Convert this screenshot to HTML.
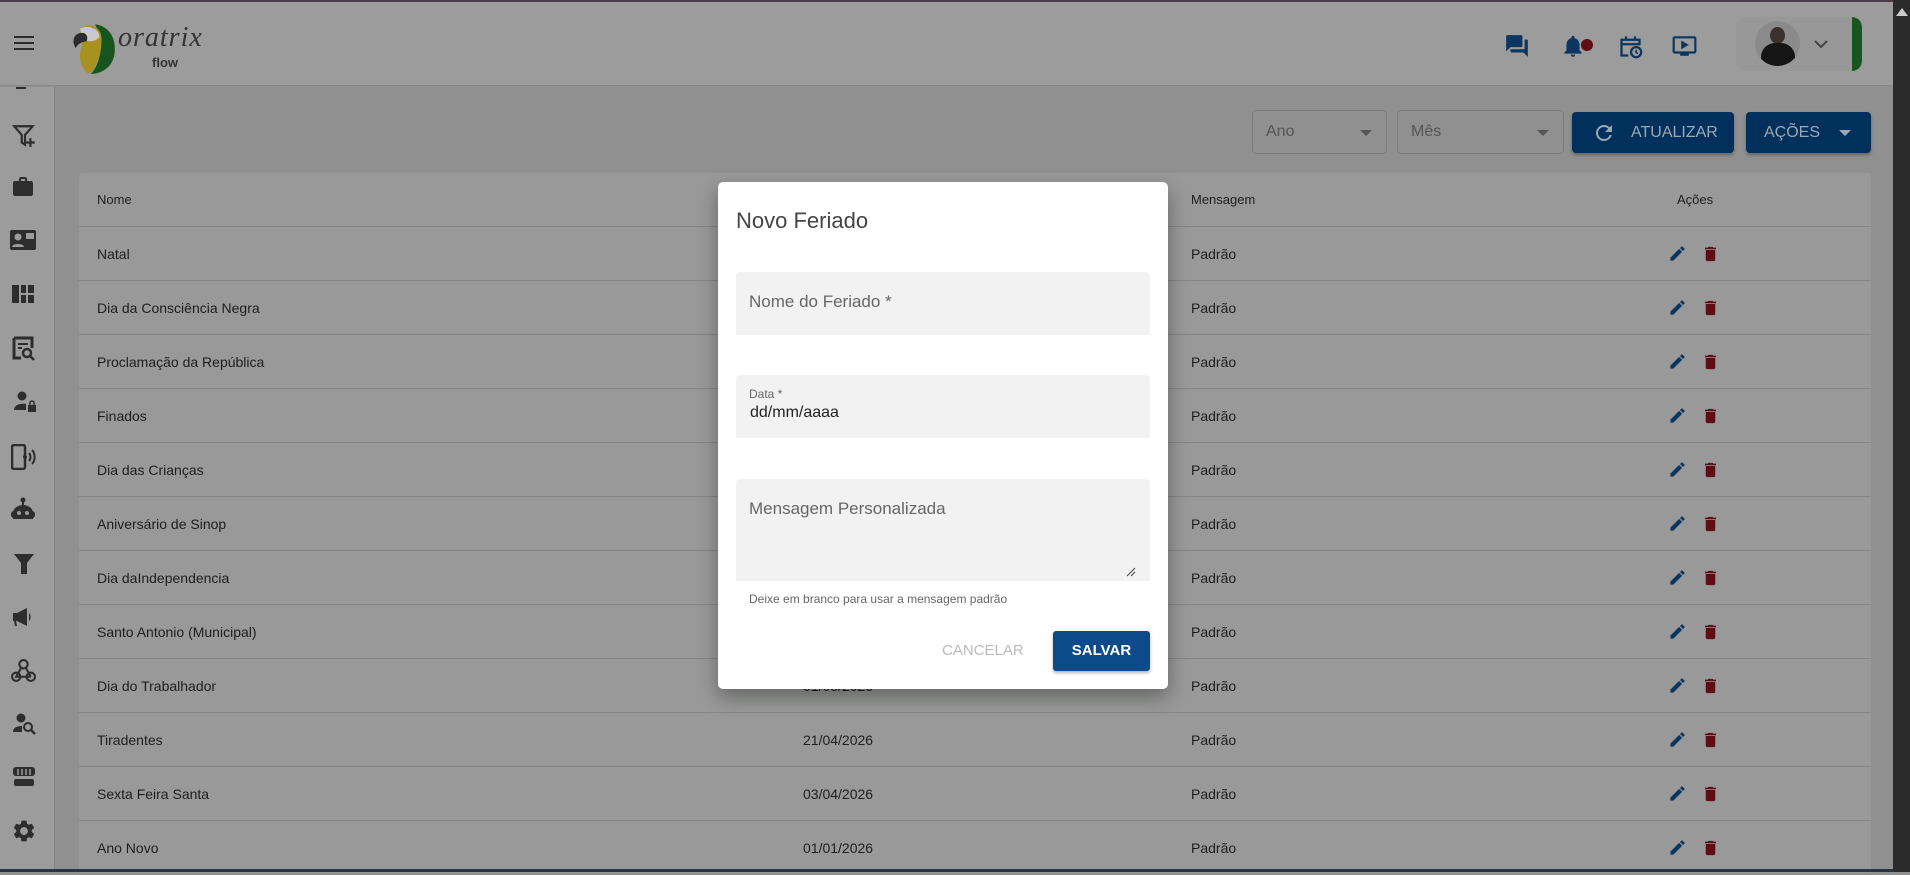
<!DOCTYPE html>
<html><head><meta charset="utf-8"><style>
*{margin:0;padding:0;box-sizing:border-box}
body{width:1910px;height:872px;overflow:hidden;background:#8f908f;font-family:"Liberation Sans",sans-serif;position:relative;color:#1e1e1e}
.abs{position:absolute}
.hdr{left:0;top:0;width:1893px;height:86px;background:#9b9c9b;border-bottom:1px solid #888;border-top:2px solid #4a3c46}
.side{left:0;top:87px;width:55px;height:785px;background:#9b9c9b;border-right:1px solid #868686}
.card{left:79px;top:173px;width:1792px;height:700px;background:#989998;border-radius:4px 4px 0 0}
.row{position:absolute;left:0;width:1792px;height:54px;border-top:1px solid #858585;font-size:14px;line-height:54px}
.row span{position:absolute}
.c1{left:18px}.c2{left:724px}.c3{left:1112px}
.sb{left:1893px;top:0;width:17px;height:872px;background:#2b2b2b}
.sel{border:1px solid #7a7a7a;border-radius:4px;height:44px;top:110px;font-size:16px;color:#555;line-height:42px;padding-left:13px}
.tri{position:absolute;right:14px;top:19px;width:0;height:0;border-left:6px solid transparent;border-right:6px solid transparent;border-top:6px solid #555}
.btn{background:#02305c;border-radius:4px;height:41px;top:112px;color:#9ea8b3;font-size:16px;line-height:41px;box-shadow:0 2px 3px rgba(0,0,0,.3)}
.modal{left:718px;top:182px;width:450px;height:507px;background:#fff;border-radius:5px;box-shadow:0 8px 20px rgba(0,0,0,.35)}
.fld{position:absolute;left:18px;width:414px;background:#f2f2f2;border-radius:4px 4px 0 0}
.lbl{position:absolute;left:13px;color:#666;font-size:17px}
</style></head><body>
<div class="abs hdr">
  <svg class="abs" style="left:14px;top:33px" width="20" height="16"><rect y="1" width="20" height="2" fill="#2d2d2d"/><rect y="7" width="20" height="2" fill="#2d2d2d"/><rect y="13" width="20" height="2" fill="#2d2d2d"/></svg>
  <svg class="abs" style="left:68px;top:18px" width="52" height="56" viewBox="0 0 46 52">
    <path d="M24 4 C38 6 44 18 42 32 C40 44 30 50 20 50 C30 40 32 20 24 4Z" fill="#17551f"/>
    <path d="M10 8 C20 2 30 6 30 18 C30 32 26 44 18 50 C10 44 8 32 12 24 Z" fill="#a8921f"/>
    <path d="M10 8 C18 4 28 8 28 16 C22 22 14 20 12 16Z" fill="#c9c9c9"/>
    <path d="M12 12 C4 12 2 20 6 26 C8 22 12 20 16 20 C18 16 16 12 12 12Z" fill="#2b2b2b"/>
  </svg>
  <div class="abs" style="left:118px;top:20px;font-family:'Liberation Serif',serif;font-style:italic;font-size:28px;color:#333;letter-spacing:1px">oratrix</div>
  <div class="abs" style="left:152px;top:53px;font-size:13px;font-weight:bold;color:#333">flow</div>
  <svg class="abs" style="left:1504px;top:31px" width="26" height="26" viewBox="0 0 24 24"><path fill="#0d355f" d="M21 6h-2v9H6v2c0 .55.45 1 1 1h11l4 4V7c0-.55-.45-1-1-1zm-4 6V3c0-.55-.45-1-1-1H3c-.55 0-1 .45-1 1v14l4-4h10c.55 0 1-.45 1-1z"/></svg>
  <svg class="abs" style="left:1560px;top:31px" width="26" height="26" viewBox="0 0 24 24"><path fill="#0d355f" d="M12 22c1.1 0 2-.9 2-2h-4c0 1.1.89 2 2 2zm6-6v-5c0-3.07-1.64-5.64-4.5-6.32V4c0-.83-.67-1.5-1.5-1.5s-1.5.67-1.5 1.5v.68C7.63 5.36 6 7.92 6 11v5l-2 2v1h16v-1l-2-2z"/></svg>
  <div class="abs" style="left:1581px;top:37px;width:12px;height:12px;border-radius:50%;background:#5e0d14"></div>
  <svg class="abs" style="left:1617px;top:31px" width="27" height="27" viewBox="0 0 24 24"><path fill="none" stroke="#0d355f" stroke-width="2" d="M10 20H4V6h16v5M4 10h16M8 3v4M16 3v4"/><circle cx="17" cy="17" r="4.5" fill="none" stroke="#0d355f" stroke-width="2"/><path d="M17 15v2.3l1.5 1" stroke="#0d355f" stroke-width="1.5" fill="none"/></svg>
  <svg class="abs" style="left:1671px;top:31px" width="27" height="26" viewBox="0 0 24 24"><path fill="#0d355f" d="M21 3H3c-1.1 0-2 .9-2 2v12c0 1.1.9 2 2 2h5v2h8v-2h5c1.1 0 2-.9 2-2V5c0-1.1-.9-2-2-2zm0 14H3V5h18v12zM16 11l-7 4V7z"/></svg>
  <div class="abs" style="left:1736px;top:15px;width:126px;height:54px;border-radius:10px;background:#979897;overflow:hidden">
    <div class="abs" style="right:0;top:0;width:10px;height:54px;background:#17561f;border-radius:0 10px 10px 0"></div>
  </div>
  <div class="abs" style="left:1755px;top:19px;width:45px;height:45px;border-radius:50%;background:#8a8a8a;overflow:hidden">
    <div class="abs" style="left:15px;top:6px;width:15px;height:17px;border-radius:50%;background:#3a302c"></div>
    <div class="abs" style="left:6px;top:22px;width:34px;height:30px;border-radius:14px 14px 0 0;background:#151515"></div>
  </div>
  <svg class="abs" style="left:1813px;top:37px" width="16" height="10"><path d="M2 2l6 6 6-6" stroke="#444" stroke-width="2" fill="none"/></svg>
</div>
<div class="abs side">
  <div class="abs" style="left:16px;top:0;width:10px;height:2px;background:#2d2d2d"></div>
  <svg class="abs" style="left:12px;top:36px" width="26" height="26" viewBox="0 0 24 24"><path d="M2 3h17l-7 8v9l-3-2v-7z" fill="none" stroke="#2d2d2d" stroke-width="2"/><path d="M17 14v8M13 18h8" stroke="#2d2d2d" stroke-width="2"/></svg>
  <svg class="abs" style="left:11px;top:88px" width="24" height="24" viewBox="0 0 24 24"><path fill="#2d2d2d" d="M20 6h-4V4c0-1.1-.9-2-2-2h-4c-1.1 0-2 .9-2 2v2H4c-1.1 0-2 .9-2 2v11c0 1.1.9 2 2 2h16c1.1 0 2-.9 2-2V8c0-1.1-.9-2-2-2zm-6 0h-4V4h4v2z"/></svg>
  <svg class="abs" style="left:9px;top:141px" width="28" height="24" viewBox="0 0 28 24"><rect x="1" y="2" width="26" height="20" rx="2" fill="#2d2d2d"/><circle cx="9" cy="9" r="3.5" fill="#9b9c9b"/><path d="M3 19c0-4 12-4 12 0z" fill="#9b9c9b"/><rect x="17" y="5" width="8" height="6" fill="#9b9c9b"/></svg>
  <svg class="abs" style="left:11px;top:195px" width="24" height="24" viewBox="0 0 24 24"><path fill="#2d2d2d" d="M1 3h7v18H1zM10 3h5v8h-5zM17 3h6v8h-6zM10 13h5v8h-5zM17 13h6v8h-6z"/></svg>
  <svg class="abs" style="left:12px;top:249px" width="24" height="26" viewBox="0 0 24 26"><path d="M2 2h18v10" fill="none" stroke="#2d2d2d" stroke-width="3"/><path d="M2 2v20h7" fill="none" stroke="#2d2d2d" stroke-width="3"/><path d="M6 8h10M6 12h4" stroke="#2d2d2d" stroke-width="2"/><circle cx="15" cy="17" r="4" fill="none" stroke="#2d2d2d" stroke-width="2.5"/><path d="M18 20l4 4" stroke="#2d2d2d" stroke-width="2.5"/></svg>
  <svg class="abs" style="left:13px;top:303px" width="24" height="24" viewBox="0 0 24 24"><circle cx="9" cy="6" r="4.5" fill="#2d2d2d"/><path d="M1 20c0-5 6-7 12-6v6z" fill="#2d2d2d"/><rect x="15" y="15" width="8" height="7" fill="#2d2d2d"/><path d="M17 15v-2a2 2 0 014 0v2" fill="none" stroke="#2d2d2d" stroke-width="1.5"/></svg>
  <svg class="abs" style="left:11px;top:357px" width="26" height="26" viewBox="0 0 26 26"><rect x="1" y="1" width="13" height="24" rx="2" fill="none" stroke="#2d2d2d" stroke-width="2.5"/><circle cx="14" cy="13" r="2" fill="#2d2d2d"/><path d="M18 9c2 2 2 6 0 8M21 6c3.5 3.5 3.5 10.5 0 14" fill="none" stroke="#2d2d2d" stroke-width="2"/></svg>
  <svg class="abs" style="left:10px;top:410px" width="26" height="24" viewBox="0 0 26 24"><circle cx="13" cy="3" r="2.5" fill="#2d2d2d"/><rect x="12" y="4" width="2" height="4" fill="#2d2d2d"/><path d="M3 16a10 8 0 0120 0v6H3z" fill="#2d2d2d"/><rect x="1" y="14" width="24" height="7" rx="3" fill="#2d2d2d"/><circle cx="9" cy="16" r="2" fill="#9b9c9b"/><circle cx="17" cy="16" r="2" fill="#9b9c9b"/></svg>
  <svg class="abs" style="left:13px;top:466px" width="22" height="22" viewBox="0 0 22 22"><path d="M1 1h20l-7 9v11h-6V10z" fill="#2d2d2d"/></svg>
  <svg class="abs" style="left:11px;top:518px" width="24" height="24" viewBox="0 0 24 24"><path fill="#2d2d2d" d="M2 8h4l10-5v18L6 16H5l1 5H4l-1-5H2zM18 8c2 1 2 7 0 8z"/></svg>
  <svg class="abs" style="left:11px;top:571px" width="25" height="25" viewBox="0 0 24 24"><circle cx="12" cy="6" r="4" fill="none" stroke="#2d2d2d" stroke-width="2"/><circle cx="5" cy="18" r="4" fill="none" stroke="#2d2d2d" stroke-width="2"/><circle cx="19" cy="18" r="4" fill="none" stroke="#2d2d2d" stroke-width="2"/><path d="M10 9l-5 9h14M14 9l5 9" fill="none" stroke="#2d2d2d" stroke-width="2"/></svg>
  <svg class="abs" style="left:12px;top:625px" width="24" height="24" viewBox="0 0 24 24"><circle cx="9" cy="6" r="4.5" fill="#2d2d2d"/><path d="M1 20c0-5 5-6 9-6v6z" fill="#2d2d2d"/><circle cx="16" cy="15" r="4" fill="none" stroke="#2d2d2d" stroke-width="2"/><path d="M19 18l4 4" stroke="#2d2d2d" stroke-width="2.5"/></svg>
  <svg class="abs" style="left:12px;top:679px" width="24" height="22" viewBox="0 0 24 22"><rect x="1" y="1" width="22" height="9" rx="3" fill="#2d2d2d"/><path d="M6 3v6M10 3v6M14 3v6M18 3v6" stroke="#9b9c9b" stroke-width="1.5"/><rect x="2" y="13" width="20" height="7" rx="2" fill="#2d2d2d"/></svg>
  <svg class="abs" style="left:11px;top:731px" width="26" height="26" viewBox="0 0 24 24"><path fill="#2d2d2d" d="M19.14 12.94c.04-.3.06-.61.06-.94 0-.32-.02-.64-.07-.94l2.03-1.58a.49.49 0 00.12-.61l-1.920-3.32a.488.488 0 00-.59-.22l-2.39.96c-.5-.38-1.03-.7-1.62-.94l-.36-2.54a.484.484 0 00-.48-.41h-3.84c-.24 0-.43.17-.47.41l-.36 2.54c-.59.24-1.13.57-1.62.94l-2.39-.96c-.22-.08-.47 0-.59.22L2.74 8.87c-.12.21-.08.47.12.61l2.03 1.58c-.05.3-.09.63-.09.94s.02.64.07.94l-2.03 1.58a.49.49 0 00-.12.61l1.92 3.32c.12.22.37.29.59.22l2.39-.96c.5.38 1.03.7 1.62.94l.36 2.54c.05.24.24.41.48.41h3.84c.24 0 .44-.17.47-.41l.36-2.54c.59-.24 1.13-.56 1.62-.94l2.390.96c.22.08.47 0 .59-.22l1.92-3.32c.12-.22.07-.47-.12-.61l-2.01-1.58zM12 15.6c-1.98 0-3.6-1.62-3.6-3.6s1.62-3.6 3.6-3.6 3.6 1.62 3.6 3.6-1.62 3.6-3.6 3.6z"/></svg>
</div>
<div class="abs sel" style="left:1252px;width:135px">Ano<div class="tri"></div></div>
<div class="abs sel" style="left:1397px;width:167px">Mês<div class="tri"></div></div>
<div class="abs btn" style="left:1572px;width:162px"><svg class="abs" style="left:20px;top:9px" width="24" height="24" viewBox="0 0 24 24"><path fill="#9ea8b3" d="M17.65 6.35A7.958 7.958 0 0012 4c-4.42 0-7.99 3.58-7.99 8s3.57 8 7.99 8c3.73 0 6.84-2.55 7.73-6h-2.08A5.99 5.99 0 0112 18c-3.31 0-6-2.69-6-6s2.69-6 6-6c1.66 0 3.14.69 4.22 1.78L13 11h7V4l-2.35 2.35z"/></svg><span class="abs" style="left:59px">ATUALIZAR</span></div>
<div class="abs btn" style="left:1746px;width:125px"><span class="abs" style="left:18px">AÇÕES</span><div class="tri" style="border-top-color:#9ea8b3;top:18px;right:20px"></div></div>
<div class="abs card">
  <div class="row" style="top:0;border-top:none;height:53px;font-size:13px"><span class="c1">Nome</span><span class="c3">Mensagem</span><span style="left:1598px">Ações</span></div>
</div>
<div class="abs" style="left:79px;top:226px;width:1792px" id="rows"></div>
<div class="abs sb"><div class="abs" style="left:3px;top:8px;width:0;height:0;border-left:6px solid transparent;border-right:6px solid transparent;border-bottom:8px solid #ccc"></div></div>
<div class="abs" style="left:0;top:869px;width:1893px;height:3px;background:#283548"></div>
<div class="abs modal">
  <div class="abs" style="left:18px;top:26px;font-size:22px;color:#444">Novo Feriado</div>
  <div class="fld" style="top:90px;height:63px"><div class="lbl" style="top:20px">Nome do Feriado *</div></div>
  <div class="fld" style="top:193px;height:63px"><div class="lbl" style="top:12px;font-size:12px">Data *</div><div class="abs" style="left:14px;top:29px;font-size:16px;color:#222">dd/mm/aaaa</div></div>
  <div class="fld" style="top:297px;height:102px"><div class="lbl" style="top:20px">Mensagem Personalizada</div><svg class="abs" style="right:14px;bottom:4px" width="10" height="10"><path d="M1 9L9 1M5 9L9 5" stroke="#444" stroke-width="1"/></svg></div>
  <div class="abs" style="left:31px;top:410px;font-size:12px;color:#666">Deixe em branco para usar a mensagem padrão</div>
  <div class="abs" style="left:224px;top:460px;font-size:15px;color:#bbb">CANCELAR</div>
  <div class="abs" style="left:335px;top:449px;width:97px;height:40px;background:#0b4a8b;border-radius:3px;color:#fff;font-size:15px;font-weight:bold;text-align:center;line-height:40px;box-shadow:0 2px 3px rgba(0,0,0,.3)">SALVAR</div>
</div>
<script>
var d=[["Natal","25/12/2026"],["Dia da Consciência Negra","20/11/2026"],["Proclamação da República","15/11/2026"],["Finados","02/11/2026"],["Dia das Crianças","12/10/2026"],["Aniversário de Sinop","14/09/2026"],["Dia daIndependencia","07/09/2026"],["Santo Antonio (Municipal)","13/06/2026"],["Dia do Trabalhador","01/05/2026"],["Tiradentes","21/04/2026"],["Sexta Feira Santa","03/04/2026"],["Ano Novo","01/01/2026"]];
var h="";d.forEach(function(r,i){h+='<div class="row" style="top:'+(i*54)+'px"><span class="c1">'+r[0]+'</span><span class="c2">'+r[1]+'</span><span class="c3">Padrão</span><svg style="position:absolute;left:1589px;top:17px" width="19" height="19" viewBox="0 0 24 24"><path fill="#0d355f" d="M3 17.25V21h3.75L17.81 9.94l-3.75-3.75L3 17.25zM20.71 7.04a1 1 0 000-1.41l-2.34-2.34a1 1 0 00-1.41 0l-1.83 1.83 3.75 3.75 1.83-1.83z"/></svg><svg style="position:absolute;left:1622px;top:17px" width="19" height="20" viewBox="0 0 24 24"><path fill="#5e0d14" d="M6 19c0 1.1.9 2 2 2h8c1.1 0 2-.9 2-2V7H6v12zM19 4h-3.5l-1-1h-5l-1 1H5v2h14V4z"/></svg></div>'});
document.getElementById("rows").innerHTML=h;
</script>
</body></html>
